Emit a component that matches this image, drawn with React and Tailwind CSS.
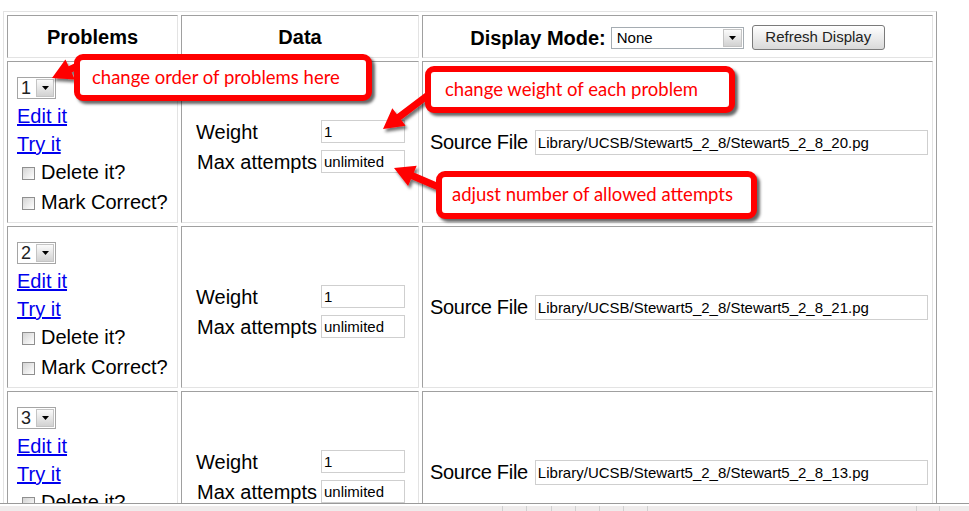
import React from 'react';

const rows = [
  { n: 1, file: 'Library/UCSB/Stewart5_2_8/Stewart5_2_8_20.pg' },
  { n: 2, file: 'Library/UCSB/Stewart5_2_8/Stewart5_2_8_21.pg' },
  { n: 3, file: 'Library/UCSB/Stewart5_2_8/Stewart5_2_8_13.pg' },
];

const Tri = () => (
  <svg width="7" height="4" viewBox="0 0 7 4">
    <path d="M0 0h7L3.5 4z" fill="#000" />
  </svg>
);

const Cell = ({ className = '', children }) => (
  <div className={`border border-t-[#a0a0a0] border-l-[#a0a0a0] border-r-[#e3e3e3] border-b-[#e3e3e3] ${className}`}>
    {children}
  </div>
);

const OrderSelect = ({ n }) => (
  <div className="flex w-[39px] h-[22px] border border-[#a5a5a5] bg-white">
    <span className="w-[18px] pl-[3px] text-[18px] leading-[20px] text-[#222]">{n}</span>
    <span className="flex-1 my-[1px] mr-[1px] flex items-center justify-center border border-[#c4c4c4] bg-linear-to-b from-[#fbfbfb] to-[#d2d2d2]">
      <Tri />
    </span>
  </div>
);

const Check = ({ label, className = '' }) => (
  <div className={`flex items-center h-[28px] pl-[5px] ${className}`}>
    <span className="w-[13px] h-[13px] mt-[2px] border border-[#8f8f8f] bg-linear-to-br from-[#d4d4d4] to-white" />
    <span className="ml-[6px] text-[20px]">{label}</span>
  </div>
);

const Field = ({ value, w }) => (
  <input
    readOnly
    value={value}
    className={`${w} border border-[#cfcfcf] px-[2px] text-[15px] text-black outline-none bg-white`}
  />
);

// arrow outline from tail to tip, shaft + head
const arrowPoints = (x1, y1, x2, y2) => {
  const dx = x2 - x1, dy = y2 - y1;
  const len = Math.hypot(dx, dy);
  const ux = dx / len, uy = dy / len;
  const px = -uy, py = ux;
  const sw = 3.5, hw = 11, hl = 20;
  const bx = x2 - ux * hl, by = y2 - uy * hl;
  const p = [
    [x1 + px * sw, y1 + py * sw],
    [bx + px * sw, by + py * sw],
    [bx + px * hw, by + py * hw],
    [x2, y2],
    [bx - px * hw, by - py * hw],
    [bx - px * sw, by - py * sw],
    [x1 - px * sw, y1 - py * sw],
  ];
  return p.map(([a, b]) => `${a.toFixed(1)},${b.toFixed(1)}`).join(' ');
};

const Callout = ({ className, children }) => (
  <div
    className={`absolute rounded-[9px] border-[6px] border-[#ff0000] bg-white shadow-[3px_3px_3px_rgba(0,0,0,0.6)] flex items-center text-[#ff0000] text-[18.5px] font-['Lato',sans-serif] ${className}`}
  >
    {children}
  </div>
);

export default function App() {
  return (
    <div className="relative w-[969px] h-[511px] overflow-hidden bg-white flex flex-col font-['Liberation_Sans',Arial,sans-serif] text-black">
      <div className="flex-1 overflow-hidden pl-[3px] pt-[11px]">
        <div className="w-[934px] border border-t-[#e3e3e3] border-l-[#e3e3e3] border-r-[#a0a0a0] border-b-[#a0a0a0] p-[3px] grid grid-cols-[171px_238px_511px] grid-rows-[43px_162px_162px_162px] gap-[3px]">
          <Cell className="flex items-center justify-center">
            <span className="text-[20px] font-bold">Problems</span>
          </Cell>
          <Cell className="flex items-center justify-center">
            <span className="text-[20px] font-bold">Data</span>
          </Cell>
          <Cell className="flex items-center justify-center pt-[2px]">
            <span className="text-[20px] font-bold mr-[5px]">Display Mode:</span>
            <div className="flex w-[133px] h-[22px] border border-[#a5acb2] bg-white">
              <span className="flex-1 pl-[5px] text-[15px] leading-[20px]">None</span>
              <span className="w-[19px] my-[1px] mr-[1px] flex items-center justify-center border border-[#c4c4c4] bg-linear-to-b from-[#fbfbfb] to-[#d2d2d2]">
                <Tri />
              </span>
            </div>
            <button className="ml-[8px] w-[133px] h-[25px] rounded-[3px] border border-[#7a7a7a] bg-linear-to-b from-white to-[#d9d9d9] text-[15px] text-[#222]">
              Refresh Display
            </button>
          </Cell>

          {rows.map((r) => (
            <React.Fragment key={r.n}>
              <Cell className="flex flex-col items-start pl-[9px] pt-[15px]">
                <OrderSelect n={r.n} />
                <a href="#" className="mt-[3px] h-[28px] leading-[28px] text-[20px] text-[#0000ee] underline">
                  Edit it
                </a>
                <a href="#" className="h-[28px] leading-[28px] text-[20px] text-[#0000ee] underline">
                  Try it
                </a>
                <Check label="Delete it?" />
                <Check label="Mark Correct?" className="mt-[2px]" />
              </Cell>
              <Cell className="pl-[14px] pt-[58px]">
                <div className="grid grid-cols-[125px_84px] grid-rows-[23px_23px] gap-y-[7px] items-center text-[20px]">
                  <span>Weight</span>
                  <Field value="1" w="w-[84px] h-[23px]" />
                  <span className="pl-[1px]">Max attempts</span>
                  <Field value="unlimited" w="w-[84px] h-[23px]" />
                </div>
              </Cell>
              <Cell className="flex items-center pl-[7px] gap-[7px]">
                <span className="text-[20px] tracking-[-0.3px]">Source File</span>
                <Field value={r.file} w="w-[393px] h-[25px]" />
              </Cell>
            </React.Fragment>
          ))}
        </div>
      </div>

      <div className="h-[8px] border-t border-[#9a9a9a] pt-[2px] shrink-0">
        <div className="h-full flex bg-[#efecec]">
          <div className="w-[503px] border-r border-[#d0d0d0]" />
          <div className="w-[24px] border-r border-[#d0d0d0]" />
          <div className="w-[25px] border-r border-[#d0d0d0]" />
          <div className="w-[24px] border-r border-[#d0d0d0]" />
          <div className="w-[24px] border-r border-[#d0d0d0]" />
          <div className="w-[24px] border-r border-[#d0d0d0]" />
          <div className="w-[24px] border-r border-[#d0d0d0]" />
          <div className="w-[269px] border-r border-[#d0d0d0]" />
          <div className="w-[23px] border-r border-[#d0d0d0]" />
        </div>
      </div>

      {/* annotation arrows */}
      <svg className="absolute inset-0 pointer-events-none" width="969" height="511">
        <defs>
          <filter id="sh" x="-20%" y="-20%" width="140%" height="140%">
            <feDropShadow dx="2" dy="3" stdDeviation="1.5" floodColor="#000" floodOpacity="0.55" />
          </filter>
        </defs>
        <g fill="#ff0000" filter="url(#sh)">
          <polygon points={arrowPoints(90, 60, 52, 78)} />
          <polygon points={arrowPoints(440, 86, 383, 129)} />
          <polygon points={arrowPoints(448, 191, 394, 168)} />
        </g>
      </svg>

      <Callout className="left-[74px] top-[54px] w-[298px] h-[47px] pl-[12px]">change order of problems here</Callout>
      <Callout className="left-[425px] top-[66px] w-[310px] h-[47px] pl-[14px]">change weight of each problem</Callout>
      <Callout className="left-[436px] top-[171px] w-[321px] h-[48px] pl-[10px]">adjust number of allowed attempts</Callout>
    </div>
  );
}
